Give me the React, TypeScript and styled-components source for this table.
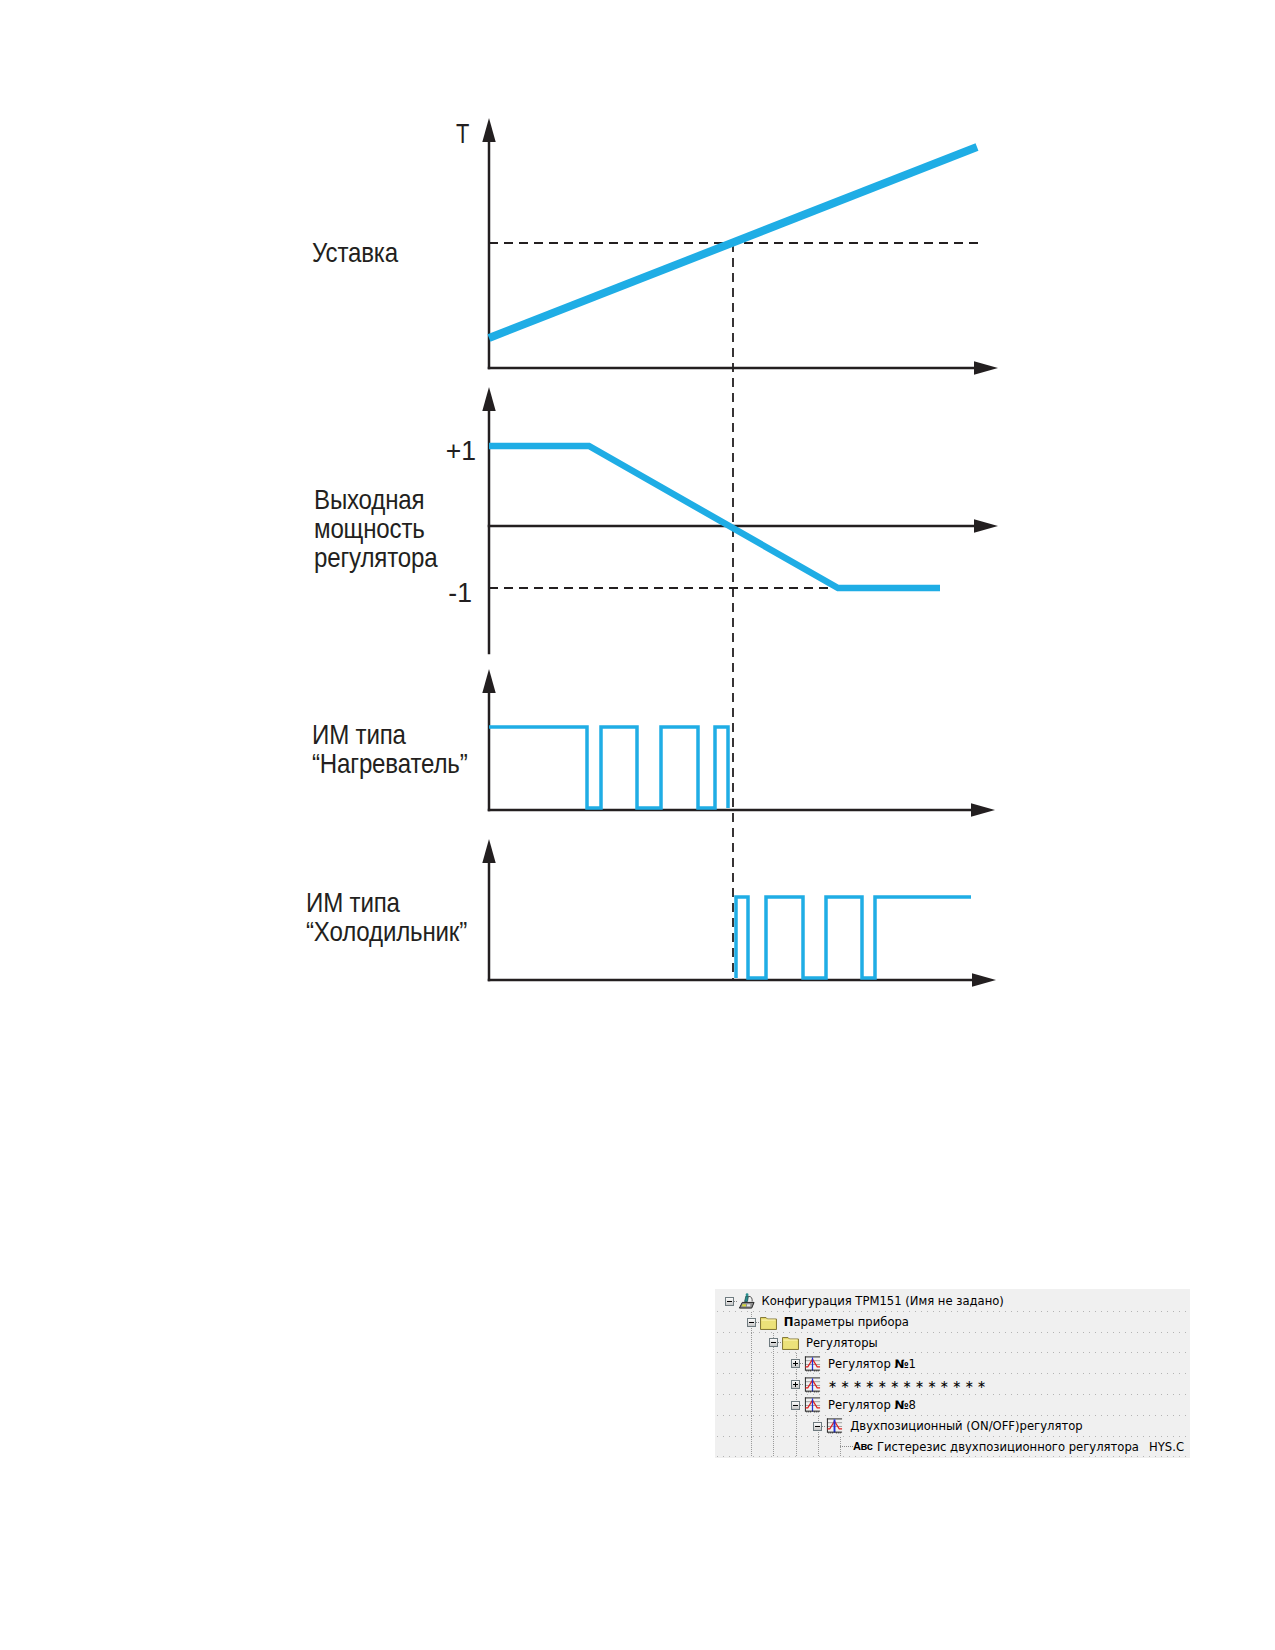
import styled, { createGlobalStyle } from "styled-components";
import type { ReactNode } from "react";

const INK = "#231f20";
const BLUE = "#1fade5";
const PLOT_W = 570;
const AXIS_X = 59;
const CROSS_X = 303;
const DASH = "9 6";
const DASH_PERIOD = 15;
const DASH_ORIGIN = 243;
const SQUEEZE = 0.86;

const GlobalStyle = createGlobalStyle`
  html, body {
    margin: 0;
    padding: 0;
    background: #ffffff;
  }
  body {
    font-family: "Liberation Sans", Arial, sans-serif;
  }
`;

const Page = styled.main`
  width: 1275px;
  min-height: 1650px;
  box-sizing: border-box;
  padding: 110px 0 0 300px;
  display: flex;
  flex-direction: column;
  align-items: flex-start;
`;

const Figure = styled.section`
  display: flex;
  flex-direction: column;
`;

const ChartRow = styled.div<{ $height: number }>`
  display: flex;
  height: ${(p) => p.$height}px;
`;

const Caption = styled.div<{ $top: number; $left: number }>`
  width: 130px;
  flex: none;
  box-sizing: border-box;
  padding-top: ${(p) => p.$top}px;
  padding-left: ${(p) => p.$left}px;
  display: flex;
  flex-direction: column;
  align-items: flex-start;
  font-family: "Liberation Sans", Arial, sans-serif;
  font-size: 28px;
  line-height: 29px;
  letter-spacing: -0.2px;
  color: ${INK};
  white-space: nowrap;
`;

/* the drawing uses a condensed grotesque; squeeze a regular one to match */
const CaptionLine = styled.span`
  display: block;
  width: max-content;
  transform: scaleX(${SQUEEZE});
  transform-origin: left center;
  margin-right: -30px;
`;

const PlotSvg = styled.svg`
  display: block;
  flex: none;
  overflow: visible;
`;

const TickLabel = styled.text`
  font-family: "Liberation Sans", Arial, sans-serif;
  font-size: 28px;
  fill: ${INK};
`;

type Tick = { text: string; x: number; y: number; anchor: "start" | "end"; squeeze: number };

type ChartSpec = {
  top: number;
  height: number;
  caption: string[];
  capTop: number;
  capLeft: number;
  yTip: number;
  yBottom: number;
  xAxis: number;
  xTip: number;
  trace: string;
  traceWidth: number;
  guide?: string;
  crossFrom: number;
  crossTo: number;
  ticks: Tick[];
};

const charts: ChartSpec[] = [
  {
    top: 110,
    height: 265,
    caption: ["Уставка"],
    capTop: 128,
    capLeft: 12,
    yTip: 8,
    yBottom: 258,
    xAxis: 258,
    xTip: 568,
    trace: "M59 228 L547 37",
    traceWidth: 8,
    guide: "M59 133 H549",
    crossFrom: 133,
    crossTo: 265,
    ticks: [{ text: "T", x: 26, y: 33, anchor: "start", squeeze: 0.78 }],
  },
  {
    top: 375,
    height: 285,
    caption: ["Выходная", "мощность", "регулятора"],
    capTop: 110,
    capLeft: 14,
    yTip: 12,
    yBottom: 278,
    xAxis: 151,
    xTip: 568,
    trace: "M59 71 H159 L408 213 H510",
    traceWidth: 6.5,
    guide: "M59 213 H408",
    crossFrom: 0,
    crossTo: 285,
    ticks: [
      { text: "+1", x: 46, y: 85, anchor: "end", squeeze: 0.95 },
      { text: "-1", x: 42, y: 227, anchor: "end", squeeze: 0.95 },
    ],
  },
  {
    top: 660,
    height: 160,
    caption: ["ИМ типа", "“Нагреватель”"],
    capTop: 60,
    capLeft: 12,
    yTip: 9,
    yBottom: 150,
    xAxis: 150,
    xTip: 565,
    trace:
      "M59 67 H157 V148 H171 V67 H207 V148 H231 V67 H268 V148 H285 V67 H298 V148",
    traceWidth: 3.5,
    crossFrom: 0,
    crossTo: 160,
    ticks: [],
  },
  {
    top: 820,
    height: 170,
    caption: ["ИМ типа", "“Холодильник”"],
    capTop: 68,
    capLeft: 6,
    yTip: 19,
    yBottom: 160,
    xAxis: 160,
    xTip: 566,
    trace:
      "M306 158 V77 H318 V158 H336 V77 H373 V158 H396 V77 H432 V158 H445 V77 H541",
    traceWidth: 3.5,
    crossFrom: 0,
    crossTo: 159,
    ticks: [],
  },
];

function Plot({ chart }: { chart: ChartSpec }) {
  // keep the long dashed line in phase across the stacked panels
  const phase =
    (((chart.top + chart.crossFrom - DASH_ORIGIN) % DASH_PERIOD) + DASH_PERIOD) %
    DASH_PERIOD;
  const headLen = 24;
  const headHalf = 6.7;

  return (
    <PlotSvg
      width={PLOT_W}
      height={chart.height}
      viewBox={`0 0 ${PLOT_W} ${chart.height}`}
    >
      {chart.guide && (
        <path
          d={chart.guide}
          fill="none"
          stroke={INK}
          strokeWidth={1.8}
          strokeDasharray={DASH}
        />
      )}
      <line
        x1={CROSS_X}
        x2={CROSS_X}
        y1={chart.crossFrom}
        y2={chart.crossTo}
        stroke={INK}
        strokeWidth={1.8}
        strokeDasharray={DASH}
        strokeDashoffset={phase}
      />
      <line
        x1={AXIS_X}
        x2={AXIS_X}
        y1={chart.yTip + headLen - 2}
        y2={chart.yBottom + 1.25}
        stroke={INK}
        strokeWidth={2.5}
      />
      <polygon
        points={`${AXIS_X},${chart.yTip} ${AXIS_X - headHalf},${chart.yTip + headLen} ${AXIS_X + headHalf},${chart.yTip + headLen}`}
        fill={INK}
      />
      <line
        x1={AXIS_X - 1.25}
        x2={chart.xTip - headLen + 2}
        y1={chart.xAxis}
        y2={chart.xAxis}
        stroke={INK}
        strokeWidth={2.5}
      />
      <polygon
        points={`${chart.xTip},${chart.xAxis} ${chart.xTip - headLen},${chart.xAxis - headHalf} ${chart.xTip - headLen},${chart.xAxis + headHalf}`}
        fill={INK}
      />
      <path
        d={chart.trace}
        fill="none"
        stroke={BLUE}
        strokeWidth={chart.traceWidth}
        strokeLinejoin="miter"
      />
      {chart.ticks.map((t) => (
        <TickLabel
          key={t.text}
          transform={`translate(${t.x} ${t.y}) scale(${t.squeeze} 1)`}
          textAnchor={t.anchor}
        >
          {t.text}
        </TickLabel>
      ))}
    </PlotSvg>
  );
}

/* ---------- tree view ---------- */

const LEVEL_STEP = 22.2;
const levelCenter = (depth: number) => 14 + LEVEL_STEP * depth;

const TreePanel = styled.div`
  width: 475px;
  height: 169px;
  margin-top: 299px;
  margin-left: 415px;
  padding-top: 2px;
  box-sizing: border-box;
  background: #f0f0f0;
  overflow: hidden;
  font-family: "DejaVu Sans", Verdana, sans-serif;
  font-size: 11.6px;
  color: #000;
`;

const Row = styled.div<{ $depth: number }>`
  height: 20.8px;
  display: flex;
  align-items: center;
  padding-left: ${(p) => levelCenter(p.$depth) - 4.5}px;
  padding-right: 6px;
  white-space: nowrap;
  background-image: ${(p) =>
    [
      ...Array.from({ length: p.$depth }, () => "linear-gradient(#9a9a9a 1px, transparent 1px)"),
      "linear-gradient(to right, #b4b4b4 1px, transparent 1px)",
    ].join(", ")};
  background-size: ${(p) =>
    [...Array.from({ length: p.$depth }, () => "1px 2px"), "6px 1px"].join(", ")};
  background-position: ${(p) =>
    [
      ...Array.from({ length: p.$depth }, (_, i) => `${Math.round(levelCenter(i + 1))}px 0`),
      "2px 100%",
    ].join(", ")};
  background-repeat: ${(p) =>
    [...Array.from({ length: p.$depth }, () => "repeat-y"), "repeat-x"].join(", ")};
`;

const Connector = styled.span<{ $width: number; $hidden?: boolean }>`
  flex: none;
  width: ${(p) => p.$width}px;
  height: 1px;
  background-image: ${(p) =>
    p.$hidden ? "none" : "linear-gradient(to right, #8a8a8a 1px, transparent 1px)"};
  background-size: 2px 1px;
`;

const IconSlot = styled.span<{ $width: number }>`
  flex: none;
  width: ${(p) => p.$width}px;
  height: 18px;
  display: flex;
  align-items: center;
`;

const Label = styled.span<{ $gap: number }>`
  margin-left: ${(p) => p.$gap}px;
  line-height: 20px;
`;

const Stars = styled.span`
  letter-spacing: 3.2px;
  font-size: 11px;
`;

const Strong = styled.b`
  font-weight: 700;
`;

const AbcBadge = styled.span`
  font-family: "Liberation Sans", Arial, sans-serif;
  font-size: 11px;
  font-weight: 700;
  letter-spacing: -0.4px;
  line-height: 1;
`;

const Value = styled.span`
  margin-left: auto;
  line-height: 20px;
`;

const ExpanderSvg = styled.svg`
  flex: none;
  display: block;
`;

function ExpanderBox({ open }: { open: boolean }) {
  const id = open ? "expOpen" : "expShut";
  return (
    <ExpanderSvg width="9" height="9" viewBox="0 0 9 9">
      <defs>
        <linearGradient id={id} x1="0" y1="0" x2="0" y2="1">
          <stop offset="0" stopColor="#ffffff" />
          <stop offset="1" stopColor="#c4c4c4" />
        </linearGradient>
      </defs>
      <rect x="0.5" y="0.5" width="8" height="8" fill={`url(#${id})`} stroke="#6f7b80" />
      <path d="M2 4.5 H7" stroke="#000" strokeWidth="1" />
      {!open && <path d="M4.5 2 V7" stroke="#000" strokeWidth="1" />}
    </ExpanderSvg>
  );
}

function DeviceIcon() {
  return (
    <svg width="18" height="18" viewBox="0 0 18 18">
      <path d="M1.5 16.5 L4.5 10.5 H17 L14.5 16.5 Z" fill="#8e8e8e" stroke="#1e1e1e" />
      <rect x="4.5" y="12.5" width="4" height="2.2" fill="#d8dc3c" />
      <rect x="9.5" y="12.5" width="3.5" height="2.2" fill="#e8e8e8" />
      <path d="M7 9.5 L8.5 3.5 L11 4 L10 9.5 Z" fill="#2b8f8f" stroke="#134848" strokeWidth="0.8" />
      <circle cx="9.6" cy="2.4" r="1.5" fill="#2b8f8f" />
      <path d="M11 4 Q15.5 4 15 9.5" fill="none" stroke="#3a3a3a" strokeWidth="0.9" />
    </svg>
  );
}

function FolderIcon() {
  return (
    <svg width="17" height="15" viewBox="0 0 17 15">
      <path d="M0.5 2.5 H6 L7.5 4 H16.5 V14.5 H0.5 Z" fill="#e4d765" stroke="#857a3a" />
      <rect x="1.5" y="5" width="14" height="8.5" fill="#ece27a" />
      <path d="M1.5 5 H15.5" stroke="#fff7b8" />
    </svg>
  );
}

function RegulatorIcon({ bold }: { bold?: boolean }) {
  return (
    <svg width="18" height="18" viewBox="0 0 18 18">
      <path d="M1 1.5 H17" stroke="#1e1e1e" strokeWidth="1" />
      <path d="M1.5 5.5 H17 M1.5 9.5 H17" stroke="#9c9c9c" strokeWidth="1" />
      <path d="M1.5 1 V16" stroke="#1e1e1e" strokeWidth="1" />
      <path d="M1.5 12 H4 L9 4 L14 12 H17" fill="none" stroke="#e02020" strokeWidth="1.3" />
      <path d="M9 2 V16" stroke="#2030d8" strokeWidth={bold ? 2 : 1.3} />
      <path d="M1.5 15.5 H17" stroke="#1e1e1e" strokeWidth="1" />
      <path
        d="M3 15.5 V17 M5 15.5 V17 M7 15.5 V17 M11 15.5 V17 M13 15.5 V17 M15 15.5 V17"
        stroke="#1e1e1e"
        strokeWidth="0.8"
      />
    </svg>
  );
}

type TreeNode = {
  depth: number;
  open: boolean | null;
  icon: "device" | "folder" | "reg" | "reg2" | "abc";
  label: ReactNode;
  value?: string;
};

const nodes: TreeNode[] = [
  { depth: 0, open: true, icon: "device", label: "Конфигурация ТРМ151 (Имя не задано)" },
  {
    depth: 1,
    open: true,
    icon: "folder",
    label: (
      <>
        <Strong>П</Strong>араметры прибора
      </>
    ),
  },
  { depth: 2, open: true, icon: "folder", label: "Регуляторы" },
  {
    depth: 3,
    open: false,
    icon: "reg",
    label: (
      <>
        Регулятор <Strong>№</Strong>1
      </>
    ),
  },
  { depth: 3, open: false, icon: "reg", label: <Stars>∗∗∗∗∗∗∗∗∗∗∗∗∗</Stars> },
  {
    depth: 3,
    open: true,
    icon: "reg",
    label: (
      <>
        Регулятор <Strong>№</Strong>8
      </>
    ),
  },
  { depth: 4, open: true, icon: "reg2", label: "Двухпозиционный (ON/OFF)регулятор" },
  {
    depth: 5,
    open: null,
    icon: "abc",
    label: "Гистерезис двухпозиционного регулятора",
    value: "HYS.C",
  },
];

function NodeIcon({ kind }: { kind: TreeNode["icon"] }) {
  switch (kind) {
    case "device":
      return <DeviceIcon />;
    case "folder":
      return <FolderIcon />;
    case "reg":
      return <RegulatorIcon />;
    case "reg2":
      return <RegulatorIcon bold />;
    default:
      return <AbcBadge>Авс</AbcBadge>;
  }
}

function TreeRow({ node }: { node: TreeNode }) {
  const isLeaf = node.open === null;
  return (
    <Row $depth={node.depth}>
      {isLeaf ? (
        <>
          <Connector $width={4.5} $hidden />
          <Connector $width={13} />
        </>
      ) : (
        <>
          <ExpanderBox open={node.open as boolean} />
          <Connector $width={4} />
        </>
      )}
      <IconSlot $width={isLeaf ? 19 : 17}>
        <NodeIcon kind={node.icon} />
      </IconSlot>
      <Label $gap={isLeaf ? 5 : 7}>{node.label}</Label>
      {node.value && <Value>{node.value}</Value>}
    </Row>
  );
}

export default function App() {
  return (
    <>
      <GlobalStyle />
      <Page>
        <Figure>
          {charts.map((chart) => (
            <ChartRow key={chart.top} $height={chart.height}>
              <Caption $top={chart.capTop} $left={chart.capLeft}>
                {chart.caption.map((line, i) => (
                  <CaptionLine key={i}>{line}</CaptionLine>
                ))}
              </Caption>
              <Plot chart={chart} />
            </ChartRow>
          ))}
        </Figure>
        <TreePanel>
          {nodes.map((node, i) => (
            <TreeRow key={i} node={node} />
          ))}
        </TreePanel>
      </Page>
    </>
  );
}
